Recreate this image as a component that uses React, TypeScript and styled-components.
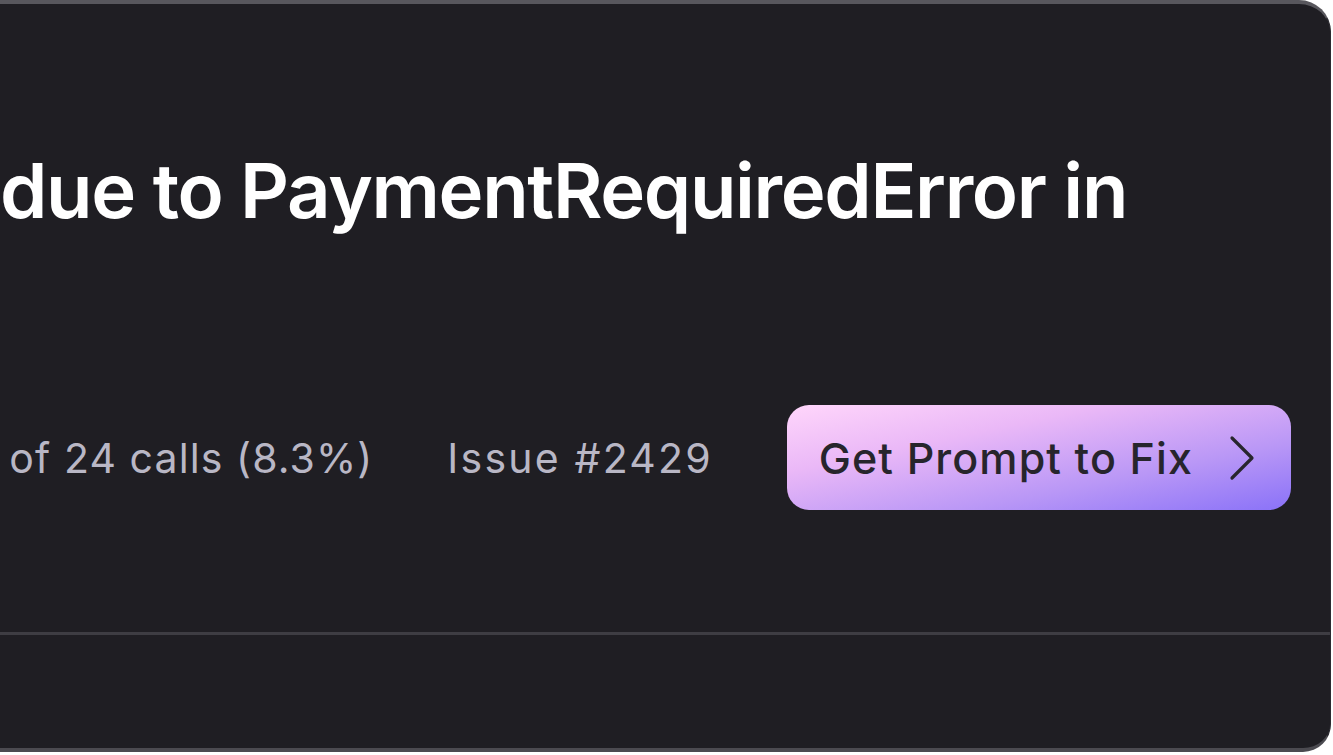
import React from "react";
import styled, { createGlobalStyle } from "styled-components";

const GlobalStyle = createGlobalStyle`
  html, body {
    margin: 0;
    padding: 0;
    background: #ffffff;
  }
  body {
    font-family: Inter, "Noto Sans", sans-serif;
    -webkit-font-smoothing: antialiased;
  }
`;

const Viewport = styled.div`
  width: 1333px;
  height: 755px;
  overflow: hidden;
  background: #ffffff;
`;

const Card = styled.section`
  box-sizing: border-box;
  width: 1331px;
  height: 752px;
  display: flex;
  flex-direction: column;
  background: #1f1e23;
  border-top: 4px solid #58575d;
  border-bottom: 4px solid #4b4a50;
  border-right: 1px solid #2b2a30;
  border-radius: 0 32px 28px 0;
`;

const Main = styled.div`
  flex: 1;
  display: flex;
  flex-direction: column;
  padding: 140px 39px 0 0;
`;

const Title = styled.h1`
  margin: 0;
  font-family: Inter, sans-serif;
  font-weight: 600;
  font-size: 76px;
  line-height: 92px;
  letter-spacing: -1.35px;
  color: #ffffff;
  white-space: nowrap;
`;

const MetaRow = styled.div`
  margin-top: 169px;
  display: flex;
  align-items: center;
  justify-content: flex-end;
  gap: 74px;
`;

const MetaText = styled.span<{ $spacing: number }>`
  flex-shrink: 0;
  font-family: Inter, sans-serif;
  font-weight: 400;
  font-size: 41px;
  letter-spacing: ${(p) => p.$spacing}px;
  color: #b9b7c5;
  white-space: nowrap;
`;

const PromptButton = styled.button`
  flex-shrink: 0;
  display: flex;
  align-items: center;
  gap: 36px;
  height: 105px;
  padding: 0 36px 0 32px;
  border: none;
  border-radius: 22px;
  background: linear-gradient(to bottom right, #ffd6fb 0%, #eab8f7 32%, #b997f6 68%, #8a72f8 100%);
  color: #27252c;
  font-family: Inter, sans-serif;
  font-weight: 500;
  font-size: 43px;
  letter-spacing: 1.1px;
  white-space: nowrap;
  cursor: pointer;
`;

const Divider = styled.div`
  height: 3px;
  background: #3e3d43;
`;

const Footer = styled.div`
  height: 113px;
`;

const Chevron = () => (
  <svg width="26" height="46" viewBox="0 0 26 46" fill="none">
    <path d="M3 3 L23 23 L3 43" stroke="#28262d" strokeWidth="3.2" strokeLinecap="round" strokeLinejoin="round" />
  </svg>
);

export default function App() {
  return (
    <>
      <GlobalStyle />
      <Viewport>
        <Card>
          <Main>
            <Title>due to PaymentRequiredError in</Title>
            <MetaRow>
              <MetaText $spacing={1.1}>of 24 calls (8.3%)</MetaText>
              <MetaText $spacing={2.2}>Issue #2429</MetaText>
              <PromptButton>
                Get Prompt to Fix
                <Chevron />
              </PromptButton>
            </MetaRow>
          </Main>
          <Divider />
          <Footer />
        </Card>
      </Viewport>
    </>
  );
}
